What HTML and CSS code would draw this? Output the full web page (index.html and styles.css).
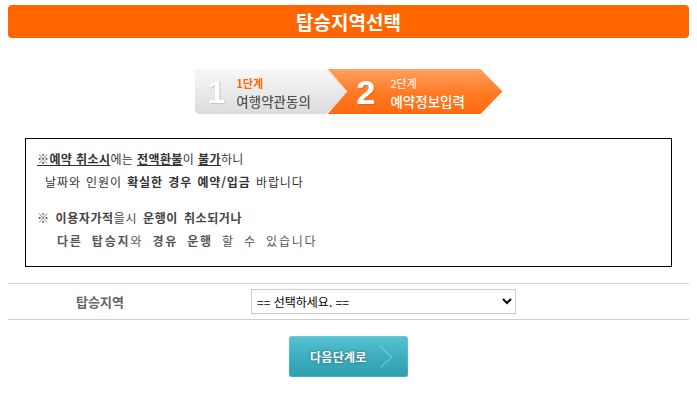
FILE: index.html
```html
<!DOCTYPE html>
<html lang="ko">
<head>
<meta charset="utf-8">
<title>탑승지역선택</title>
<link rel="stylesheet" href="styles.css">
</head>
<body>
<div class="page">
  <h1 class="title">탑승지역선택</h1>

  <div class="steps">
    <div class="step-wrap">
      <div class="step step-done">
        <span class="num">1</span>
        <div class="lbl"><span class="sm">1단계</span><span class="big">여행약관동의</span></div>
      </div>
    </div>
    <div class="step step-cur">
      <span class="num">2</span>
      <div class="lbl"><span class="sm">2단계</span><span class="big">예약정보입력</span></div>
    </div>
  </div>

  <div class="notice">
    <p class="l1"><b class="u">※예약 취소시</b>에는 <b class="u">전액환불</b>이 <b class="u">불가</b>하니</p>
    <p class="l2">날짜와 인원이 <b>확실한 경우 예약/입금</b> 바랍니다</p>
    <div class="blank"></div>
    <p class="l3"><b>※ 이용자가적</b>을시 <b>운행이 취소되거나</b></p>
    <p class="l4"><b>다른 탑승지</b>와 <b>경유 운행</b> 할 수 있습니다</p>
  </div>

  <div class="row">
    <div class="row-label">탑승지역</div>
    <div class="row-field">
      <select class="sel">
        <option>== 선택하세요. ==</option>
      </select>
    </div>
  </div>

  <div class="actions">
    <button class="next" type="button">
      <span>다음단계로</span>
      <svg width="14" height="24" viewBox="0 0 14 24" aria-hidden="true">
        <path d="M1.5 1.5 L12.5 12 L1.5 22.5" fill="none" stroke="#86d3de" stroke-width="1.5" stroke-dasharray="1.5 1.3"/>
      </svg>
    </button>
  </div>
</div>
</body>
</html>
```

FILE: styles.css
```css
* { box-sizing: border-box; }
html, body { margin: 0; padding: 0; background: #fff; }
body {
  font-family: "Noto Sans CJK KR", "Noto Sans", sans-serif;
  color: #333;
}
.page { width: 697px; padding-top: 5px; }

.title {
  margin: 0 8px;
  height: 33px;
  line-height: 33px;
  background: #ff6600;
  border-radius: 4px;
  color: #fff;
  font-size: 19px;
  font-weight: bold;
  text-align: center;
}

.steps {
  display: flex;
  justify-content: center;
  margin-top: 31px;
}
.step-wrap { filter: drop-shadow(0 0 0.6px rgba(0,0,0,0.45)); }
.step {
  height: 45px;
  display: flex;
  align-items: center;
}
.step-done {
  width: 153px;
  padding-left: 13px;
  background: linear-gradient(#f8f8f8, #dcdcdc);
  clip-path: polygon(4px 0, 131px 0, 153px 50%, 131px 100%, 4px 100%, 0 calc(100% - 4px), 0 4px);
}
.step-cur {
  width: 175px;
  margin-left: -20px;
  padding-left: 29px;
  background: linear-gradient(#ffa062, #ff7a22 55%, #ff6a10);
  clip-path: polygon(0 0, 153px 0, 175px 50%, 153px 100%, 0 100%, 20px 50%);
}
.num {
  font-family: "Liberation Sans", Arial, sans-serif;
  font-weight: bold;
  font-size: 32px;
  line-height: 1;
  color: #fff;
}
.step-done .num { margin-right: 11px; text-shadow: 0 0 1px #bdbdbd, 1px 1px 1px #c8c8c8; }
.step-cur .num { font-size: 34px; margin-right: 15px; text-shadow: 1px 1px 1px rgba(180,70,0,0.4); }
.lbl { display: flex; flex-direction: column; margin-top: 2px; }
.sm { font-size: 11px; line-height: 16px; }
.big { font-size: 13.5px; line-height: 20px; font-weight: 500; }
.step-done .sm { color: #ff6600; font-weight: bold; }
.step-done .big { color: #555; }
.step-cur .sm, .step-cur .big { color: #fff; }

.notice {
  margin: 24px 25px 0;
  border: 1px solid #000;
  padding: 8px 11px 14px;
  font-size: 12px;
  line-height: 23px;
  color: #333;
}
.notice p { margin: 0; white-space: nowrap; }
.notice b { font-weight: bold; }
.u { text-decoration: underline; }
.l1 { letter-spacing: 0.4px; }
.l2 { padding-left: 8px; letter-spacing: 0.9px; word-spacing: 1px; }
.blank { height: 13px; }
.l3 { letter-spacing: 0.6px; color: #444; word-spacing: 2px; }
.l4 { padding-left: 20px; letter-spacing: 1.8px; word-spacing: 4px; color: #555; }

.row {
  display: flex;
  align-items: center;
  margin: 16px 8px 0;
  height: 37px;
  border-top: 1px solid #cfcfcf;
  border-bottom: 1px solid #cfcfcf;
}
.row-label {
  width: 184px;
  text-align: center;
  font-size: 13px;
  font-weight: bold;
  color: #666;
}
.row-field { padding-left: 59px; display: flex; }
.sel {
  width: 265px;
  height: 25px;
  border: 1px solid #cccccc;
  border-radius: 0;
  background: #fff;
  font-family: "Noto Sans CJK KR", sans-serif;
  font-size: 12px;
  color: #000;
  padding: 0 1px;
}

.actions {
  display: flex;
  justify-content: center;
  margin-top: 16px;
}
.next {
  width: 119px;
  height: 41px;
  display: flex;
  align-items: center;
  padding: 0 0 0 21px;
  gap: 12px;
  border: 0;
  border-radius: 3px;
  background: linear-gradient(#55c3d2, #3aaabb 60%, #2f9fb1);
  box-shadow: inset 0 0 0 1px rgba(255,255,255,0.12), 0 1px 1px rgba(0,0,0,0.15);
  color: #fff;
  font-family: "Noto Sans CJK KR", sans-serif;
  font-size: 12px;
  font-weight: bold;
  letter-spacing: 0.3px;
  text-shadow: 0 0 3px rgba(0,40,50,0.55);
  cursor: pointer;
}
.next svg { display: block; }
```
